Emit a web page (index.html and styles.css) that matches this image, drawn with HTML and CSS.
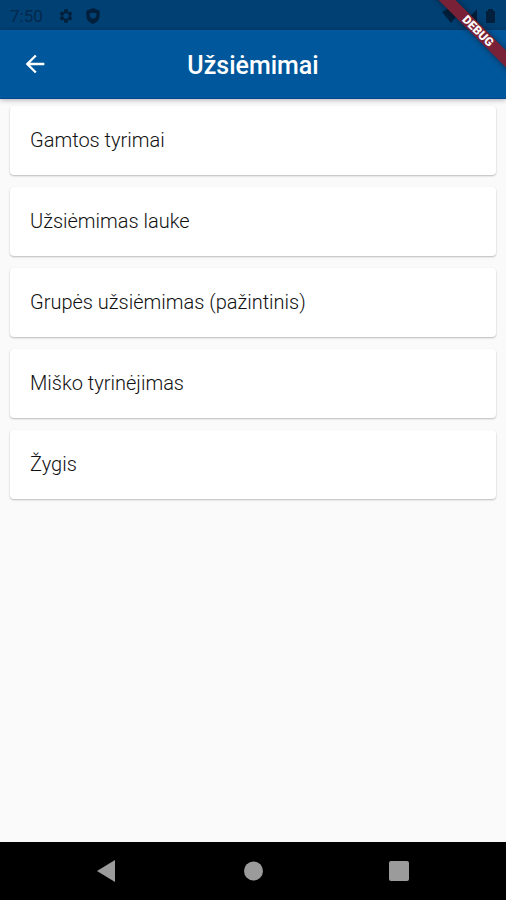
FILE: index.html
```html
<!DOCTYPE html>
<html lang="lt">
<head>
<meta charset="utf-8">
<meta name="viewport" content="width=device-width, initial-scale=1">
<title>Užsiėmimai</title>
<link rel="stylesheet" href="styles.css">
</head>
<body>
<div class="screen">
  <div class="status-bar">
    <time class="clock">7:50</time>
    <svg class="status-icon" viewBox="0 0 24 24" aria-hidden="true"><path fill-rule="evenodd" d="M19.4 13a7.500 7.500 0 0 0 0-2l2.200-1.700-2.300-4-2.600 1a8 8 0 0 0-1.700-1L14.600 2H9.400L9 5.300a8 8 0 0 0-1.700 1l-2.600-1-2.300 4L4.600 11a7.500 7.500 0 0 0 0 2l-2.200 1.700 2.300 4 2.600-1a8 8 0 0 0 1.700 1l.4 3.300h5.200l.4-3.300a8 8 0 0 0 1.700-1l2.600 1 2.300-4zM12 16a4 4 0 1 1 0-8 4 4 0 0 1 0 8z"/></svg>
    <svg class="status-icon shield" viewBox="0 0 24 24" aria-hidden="true"><path fill-rule="evenodd" d="M12 0 2 4v8c0 6 5 10 10 12 5-2 10-6 10-12V4zM7 8l5-1 5 1v3c0 3-2 5-5 5s-5-2-5-5z"/></svg>
    <svg class="system-icons" viewBox="0 0 56 16" aria-hidden="true"><path d="M0 4q9-7 18 0L9 15zM35 1v14H22zM44 3h2V1h5v2h2v12h-9z"/></svg>
  </div>
  <header class="app-bar">
    <button class="back" type="button" aria-label="Atgal">
      <svg viewBox="0 0 24 24" aria-hidden="true"><path d="M20 11H7.830l5.590-5.590L12 4l-8 8 8 8 1.410-1.410L7.830 13H20z"/></svg>
    </button>
    <h1>Užsiėmimai</h1>
  </header>
  <main>
    <ul class="list">
      <li><button class="card" type="button">Gamtos tyrimai</button></li>
      <li><button class="card" type="button">Užsiėmimas lauke</button></li>
      <li><button class="card" type="button">Grupės užsiėmimas (pažintinis)</button></li>
      <li><button class="card" type="button">Miško tyrinėjimas</button></li>
      <li><button class="card" type="button">Žygis</button></li>
    </ul>
  </main>
  <nav class="nav-bar">
    <button type="button" aria-label="Back"><svg viewBox="0 0 22 22" aria-hidden="true"><path d="M1 11 19 0v22z"/></svg></button>
    <button type="button" aria-label="Home"><svg viewBox="0 0 22 22" aria-hidden="true"><circle cx="11.500" cy="11" r="9.500"/></svg></button>
    <button type="button" aria-label="Overview"><svg viewBox="0 0 22 22" aria-hidden="true"><rect x="1" y="1" width="20" height="20" rx="2"/></svg></button>
  </nav>
  <div class="ribbon-corner"><span class="ribbon">DEBUG</span></div>
</div>
</body>
</html>
```
FILE: styles.css
```css
* {
  box-sizing: border-box;
}

body {
  margin: 0;
  background: #fafafa;
  color: #111;
  font-family: Roboto, "Liberation Sans", sans-serif;
}

button {
  border: 0;
  font: inherit;
  color: inherit;
}

.screen {
  position: relative;
  display: flex;
  flex-direction: column;
  min-height: 100vh;
  overflow: hidden;
}

.status-bar {
  display: flex;
  align-items: center;
  height: 30px;
  padding: 2px 8px 0 10px;
  background: #004073;
  color: #04294d;
}

.clock {
  margin-right: 15px;
  font-size: 17px;
}

.status-icon {
  width: 16px;
  height: 16px;
  margin-right: 11px;
  fill: #02203c;
}

.system-icons {
  width: 56px;
  height: 16px;
  margin-left: auto;
  fill: #02203c;
}

.app-bar {
  position: relative;
  display: grid;
  grid-template-columns: 70px 1fr 70px;
  align-items: center;
  height: 69px;
  background: #01579b;
  border-bottom: 1px solid #024590;
  box-shadow: 0 1px 5px rgba(0, 0, 0, 0.3);
  color: #fff;
}

.back {
  display: grid;
  place-items: center;
  height: 68px;
  padding: 0;
  background: none;
}

.back svg {
  width: 28px;
  height: 28px;
  fill: currentColor;
}

h1 {
  margin: 0;
  padding-top: 4px;
  font-size: 25px;
  font-weight: 500;
  line-height: 32px;
  text-align: center;
}

main {
  flex: 1;
}

.list {
  display: grid;
  gap: 12px;
  margin: 0;
  padding: 7px 10px;
  list-style: none;
}

.card {
  display: block;
  width: 100%;
  padding: 20px;
  border-radius: 4px;
  background: #fff;
  box-shadow: 0 1px 2px rgba(0, 0, 0, 0.26);
  font-size: 20px;
  font-weight: 300;
  line-height: 29px;
  text-align: left;
}

.nav-bar {
  display: flex;
  justify-content: center;
  gap: 124px;
  height: 58px;
  background: #000;
}

.nav-bar button {
  display: grid;
  place-items: center;
  padding: 0;
  background: none;
}

.nav-bar svg {
  width: 22px;
  height: 22px;
  fill: #9b9b9b;
}

.ribbon-corner {
  position: absolute;
  top: 0;
  right: 0;
  width: 80px;
  height: 80px;
  overflow: hidden;
  pointer-events: none;
}

.ribbon {
  position: absolute;
  top: 25px;
  right: -32px;
  width: 120px;
  background: #792136;
  box-shadow: 0 0 6px rgba(0, 0, 0, 0.45);
  color: #fff;
  font-size: 12px;
  font-weight: 900;
  line-height: 12px;
  text-align: center;
  transform: rotate(45deg);
}
```
